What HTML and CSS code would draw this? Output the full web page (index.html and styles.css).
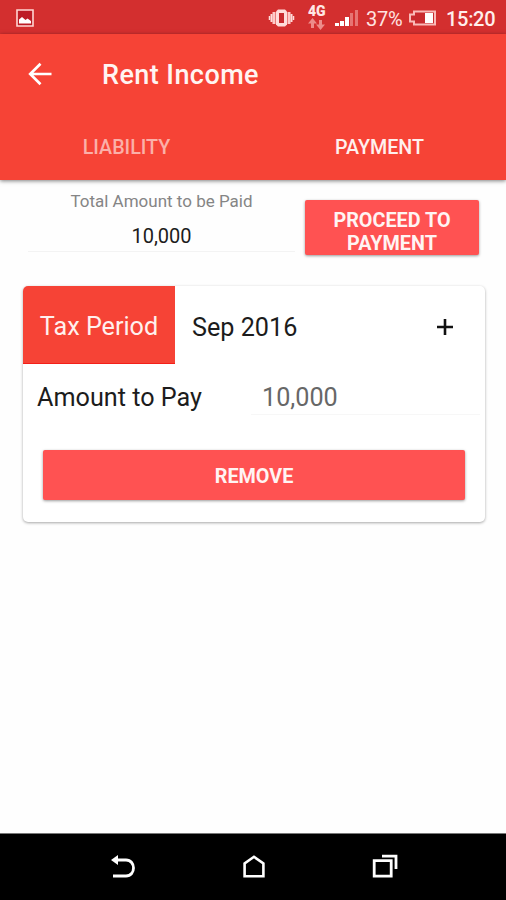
FILE: index.html
```html
<!DOCTYPE html>
<html lang="en">
<head>
<meta charset="utf-8">
<title>Rent Income</title>
<link rel="stylesheet" href="styles.css">
</head>
<body>
<div class="screen">
  <div class="status">
    <svg class="picture" width="18" height="18" viewBox="0 0 18 18"><path d="M1 1h16v16H1z" fill="#bd1c25" stroke="#ffd6d3" stroke-width="1.6"/><path d="M3 14.500V10.500l3-2.500 3.500 3 2-1.500 3.500 2.500v2.500z" fill="#fff"/></svg>
    <div class="indicators">
      <svg class="vibrate" width="27" height="20" viewBox="0 0 27 20"><path d="M10 1.500h7l2 2v13l-2 2h-7l-2-2v-13z" fill="#ffdcda"/><path d="M11 5h5v10h-5z" fill="#c92a2e"/><path d="M6 4v12M21 4v12" stroke="#ffc9c7" stroke-width="3"/><path d="M3.500 6v8M23.500 6v8" stroke="#ffdcda" stroke-width="2"/><path d="M1.500 8v4M25.500 8v4" stroke="#ffdcda" stroke-width="1.500"/></svg>
      <div class="network"><span class="gen">4G</span>
        <svg width="17" height="12" viewBox="0 0 17 12"><path d="M4.500 0L0 5.500h3V10h3V5.500h3zM12.500 12L17 6.500h-3V2h-3v4.500H8z" fill="#ed8c8a"/></svg>
      </div>
      <svg class="signal" width="23" height="18" viewBox="0 0 23 18"><path d="M0 14h4v3H0zM5 12h4v5H5zM10 8h4v9h-4z" fill="#fff"/><path d="M15 4h3v13h-3zM20 1h3v16h-3z" fill="#e77473"/></svg>
      <span class="percent">37%</span>
      <svg class="battery" width="27" height="16" viewBox="0 0 27 16"><path d="M5 1.500h21v13H5v-3H1v-7h4z" fill="#c92a2e" stroke="#f9bab8" stroke-width="2"/><path d="M16 3h8v10h-8z" fill="#fff"/></svg>
      <span class="clock">15:20</span>
    </div>
  </div>
  <header class="header">
    <div class="titlebar">
      <svg class="back" width="24" height="24" viewBox="0 0 24 24"><path d="M23.500 12H2.500M12.500 1.700L2.200 12l10.300 10.300" fill="none" stroke="#fff" stroke-width="2.700"/></svg>
      <h1>Rent Income</h1>
    </div>
    <nav class="tabs"><span class="tab">LIABILITY</span><span class="tab active">PAYMENT</span></nav>
  </header>
  <main class="content">
    <section class="summary">
      <div class="total"><div class="total-label">Total Amount to be Paid</div><div class="total-value">10,000</div></div>
      <button class="button proceed">PROCEED TO<br>PAYMENT</button>
    </section>
    <section class="card">
      <div class="period"><div class="period-label">Tax Period</div><div class="month">Sep 2016</div>
        <svg class="plus" width="16" height="16" viewBox="0 0 16 16"><path d="M0 8h16M8 0v16" stroke="#111" stroke-width="2.600"/></svg>
      </div>
      <div class="amount"><span class="amount-label">Amount to Pay</span><span class="amount-value">10,000</span></div>
      <button class="button remove">REMOVE</button>
    </section>
  </main>
  <footer class="navbar">
    <svg width="26" height="26" viewBox="0 0 26 26"><path d="M6 6h10c10 0 10 16 0 16H3" fill="none" stroke="#fff" stroke-width="2.800"/><path d="M1 6l7-5v10z" fill="#fff"/></svg>
    <svg width="26" height="26" viewBox="0 0 26 26"><path d="M3.600 22.200V9.500L13 2.800l9.400 6.700v12.700z" fill="none" stroke="#fff" stroke-width="2.600"/></svg>
    <svg width="26" height="26" viewBox="0 0 26 26"><path d="M2.200 6.700h17v15.500h-17z" fill="none" stroke="#fff" stroke-width="2.800"/><path d="M10 2.200h14V15" fill="none" stroke="#fff" stroke-width="2.800"/></svg>
  </footer>
</div>
</body>
</html>
```

FILE: styles.css
```css
* { box-sizing: border-box; }
body { margin: 0; font-family: Roboto, sans-serif; color: #1c1c1c; }
svg { display: block; flex: none; }
.screen { width: 506px; height: 900px; display: flex; flex-direction: column; background: #fefefe; overflow: hidden; white-space: nowrap; }
.status { height: 34px; flex: none; background: #d32f2f; color: #fff; display: flex; justify-content: space-between; align-items: center; padding: 2px 11px 0 16px; }
.indicators { display: flex; align-items: center; }
.network { width: 18px; height: 26px; margin: 0 9px 0 13px; }
.gen { display: block; font-size: 14px; line-height: 13px; font-weight: 900; color: #ffe7e5; }
.percent { width: 37px; margin-left: 8px; font-size: 20px; letter-spacing: -.2px; padding-top: 2px; color: #ffe3e1; }
.battery { margin-left: 6px; }
.clock { width: 49px; margin-left: 10px; font-size: 20px; letter-spacing: -.3px; padding-top: 2px; font-weight: 500; color: #ffefed; }
.header { height: 146px; flex: none; background: #f64336; color: #fff; box-shadow: 0 1px 4px rgba(0,0,0,.5); }
.titlebar { height: 80px; display: flex; align-items: center; padding-left: 28px; }
h1 { margin: 2px 0 0 50px; font-size: 27px; letter-spacing: .43px; line-height: 32px; font-weight: 500; color: #fff4f2; }
.tabs { height: 66px; display: grid; grid-template-columns: 1fr 1fr; font-size: 19.700px; font-weight: 500; line-height: 68px; text-align: center; color: #fbb0a9; }
.active { color: #fff0ee; }
.content { flex: 1; padding: 10px 21px 0 23px; }
.summary { display: flex; justify-content: space-between; padding: 0 6px 0 5px; }
.total { width: 267px; height: 62px; border-bottom: 1px solid #f3f3f3; text-align: center; }
.total-label { font-size: 17px; line-height: 23px; color: #858585; }
.total-value { font-size: 20px; line-height: 24px; margin-top: 11px; }
.button { display: block; border: 0; padding: 0; background: #ff5252; color: #fff4f3; font-family: inherit; font-weight: 700; text-align: center; border-radius: 2px; box-shadow: 0 1px 3px rgba(0,0,0,.4); }
.proceed { width: 174px; height: 55px; margin-top: 10px; padding-top: 8px; font-size: 19.800px; line-height: 23px; }
.card { height: 236px; margin-top: 31px; border-radius: 5px; background: #fff; box-shadow: 0 1px 3px rgba(0,0,0,.35); overflow: hidden; }
.period { height: 78px; display: flex; align-items: center; font-size: 25.200px; }
.period-label { width: 152px; height: 78px; line-height: 82px; text-align: center; background: #f64336; border-bottom: 1px solid #f41f19; color: #fff0ee; }
.month { width: 253px; padding: 4px 0 0 17px; }
.plus { margin: 4px 0 0 9px; }
.amount { height: 50px; margin: 1px 5px 0 14px; display: flex; font-size: 25.200px; line-height: 66px; }
.amount-label { width: 214px; }
.amount-value { flex: 1; height: 50px; padding-left: 11px; border-bottom: 1px solid #f7f7f7; color: #676767; }
.remove { width: 422px; height: 50px; margin: 35px 0 0 20px; padding-top: 2px; font-size: 19.800px; }
.navbar { height: 67px; flex: none; background: #000; border-top: 1px solid #777; display: flex; justify-content: space-between; padding: 20px 108px 0 110px; }
```
